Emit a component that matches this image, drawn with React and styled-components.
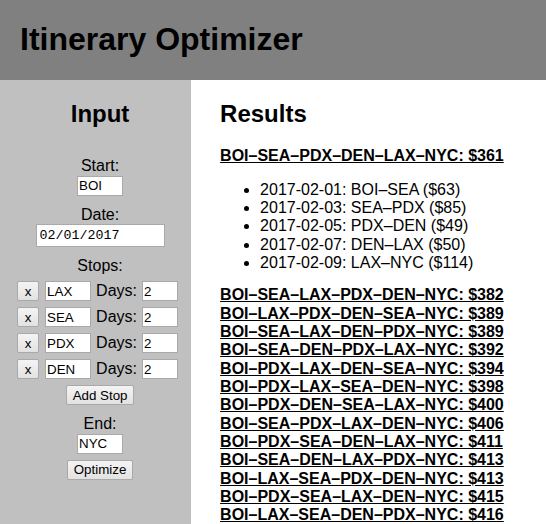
import styled, { createGlobalStyle } from "styled-components";

const GlobalStyle = createGlobalStyle`
  html, body {
    margin: 0;
    padding: 0;
    background: #ffffff;
    font-family: "Liberation Sans", Arial, sans-serif;
    color: #000;
  }
`;

const Page = styled.div`
  display: flex;
  flex-direction: column;
  min-height: 100vh;
`;

const Header = styled.header`
  background-color: #808080;
  padding: 0 20px;
`;

const Title = styled.h1`
  margin: 21.44px 0;
  font-size: 32px;
  line-height: 37px;
  font-weight: bold;
`;

const Body = styled.div`
  display: flex;
  flex: 1;
`;

const Sidebar = styled.aside`
  width: 35%;
  box-sizing: border-box;
  background-color: #c0c0c0;
  padding-left: 9px;
  display: flex;
  flex-direction: column;
  align-items: center;
`;

const Main = styled.main`
  flex: 1;
  padding: 0 29px;
`;

const Heading = styled.h2`
  margin: 19.92px 0;
  font-size: 24px;
  line-height: 27.6px;
  font-weight: bold;
`;

const Field = styled.div`
  display: flex;
  flex-direction: column;
  align-items: center;
  margin-top: 10px;
`;

const Label = styled.label`
  font-size: 16px;
  line-height: 18.4px;
  display: block;
`;

const TextInput = styled.input`
  box-sizing: border-box;
  width: ${(p) => p.$width}px;
  height: ${(p) => p.$height || 20}px;
  margin: 0;
  padding: 1px ${(p) => (p.$mono ? 3 : 1)}px;
  border: 1px solid #a9a9a9;
  background: #fff;
  font-family: ${(p) =>
    p.$mono ? '"Liberation Mono", "DejaVu Sans Mono", monospace' : '"Liberation Sans", Arial, sans-serif'};
  font-size: 13.33px;
  color: #000;
  outline: none;
`;

const Button = styled.button`
  box-sizing: border-box;
  height: 20px;
  margin: 0;
  padding: 0 6px;
  border: 1px solid #a9a9a9;
  border-radius: 2px;
  background: linear-gradient(#f4f4f4, #e2e2e2);
  font-family: "Liberation Sans", Arial, sans-serif;
  font-size: 13.33px;
  color: #000;
  cursor: pointer;
`;

const Stops = styled.div`
  display: flex;
  flex-direction: column;
  align-items: center;
  gap: 6px;
  margin-top: 5.6px;
  padding-right: 5px;
`;

const StopRow = styled.div`
  display: flex;
  align-items: center;
  height: 20px;
`;

const DaysLabel = styled.span`
  font-size: 16px;
  margin: 0 5px;
`;

const RemoveButton = styled(Button)`
  width: 22px;
  padding: 0;
  margin-right: 6px;
`;

const Action = styled.div`
  margin-top: 6px;
`;

const Route = styled.div`
  font-size: 16px;
  line-height: 18.33px;
  font-weight: bold;
  text-decoration: underline;
  white-space: nowrap;
`;

const Legs = styled.ul`
  margin: 15px 0 14px;
  padding-left: 40px;
  font-size: 16px;
  line-height: 18.33px;
`;

const stops = ["LAX", "SEA", "PDX", "DEN"];

const best = {
  route: "BOI–SEA–PDX–DEN–LAX–NYC: $361",
  legs: [
    "2017-02-01: BOI–SEA ($63)",
    "2017-02-03: SEA–PDX ($85)",
    "2017-02-05: PDX–DEN ($49)",
    "2017-02-07: DEN–LAX ($50)",
    "2017-02-09: LAX–NYC ($114)",
  ],
};

const others = [
  "BOI–SEA–LAX–PDX–DEN–NYC: $382",
  "BOI–LAX–PDX–DEN–SEA–NYC: $389",
  "BOI–SEA–LAX–DEN–PDX–NYC: $389",
  "BOI–SEA–DEN–PDX–LAX–NYC: $392",
  "BOI–PDX–LAX–DEN–SEA–NYC: $394",
  "BOI–PDX–LAX–SEA–DEN–NYC: $398",
  "BOI–PDX–DEN–SEA–LAX–NYC: $400",
  "BOI–SEA–PDX–LAX–DEN–NYC: $406",
  "BOI–PDX–SEA–DEN–LAX–NYC: $411",
  "BOI–SEA–DEN–LAX–PDX–NYC: $413",
  "BOI–LAX–SEA–PDX–DEN–NYC: $413",
  "BOI–PDX–SEA–LAX–DEN–NYC: $415",
  "BOI–LAX–SEA–DEN–PDX–NYC: $416",
];

export default function App() {
  return (
    <Page>
      <GlobalStyle />
      <Header>
        <Title>Itinerary Optimizer</Title>
      </Header>
      <Body>
        <Sidebar>
          <Heading>Input</Heading>
          <Field>
            <Label>Start:</Label>
            <TextInput $width={46} defaultValue="BOI" />
          </Field>
          <Field>
            <Label>Date:</Label>
            <TextInput $width={129} $height={23} $mono defaultValue="02/01/2017" />
          </Field>
          <Field>
            <Label>Stops:</Label>
            <Stops>
              {stops.map((s) => (
                <StopRow key={s}>
                  <RemoveButton>x</RemoveButton>
                  <TextInput $width={46} defaultValue={s} />
                  <DaysLabel>Days:</DaysLabel>
                  <TextInput $width={36} defaultValue="2" />
                </StopRow>
              ))}
            </Stops>
            <Action>
              <Button>Add Stop</Button>
            </Action>
          </Field>
          <Field>
            <Label>End:</Label>
            <TextInput $width={46} defaultValue="NYC" />
            <Action>
              <Button>Optimize</Button>
            </Action>
          </Field>
        </Sidebar>
        <Main>
          <Heading>Results</Heading>
          <Route>{best.route}</Route>
          <Legs>
            {best.legs.map((l) => (
              <li key={l}>{l}</li>
            ))}
          </Legs>
          {others.map((r) => (
            <Route key={r}>{r}</Route>
          ))}
        </Main>
      </Body>
    </Page>
  );
}
